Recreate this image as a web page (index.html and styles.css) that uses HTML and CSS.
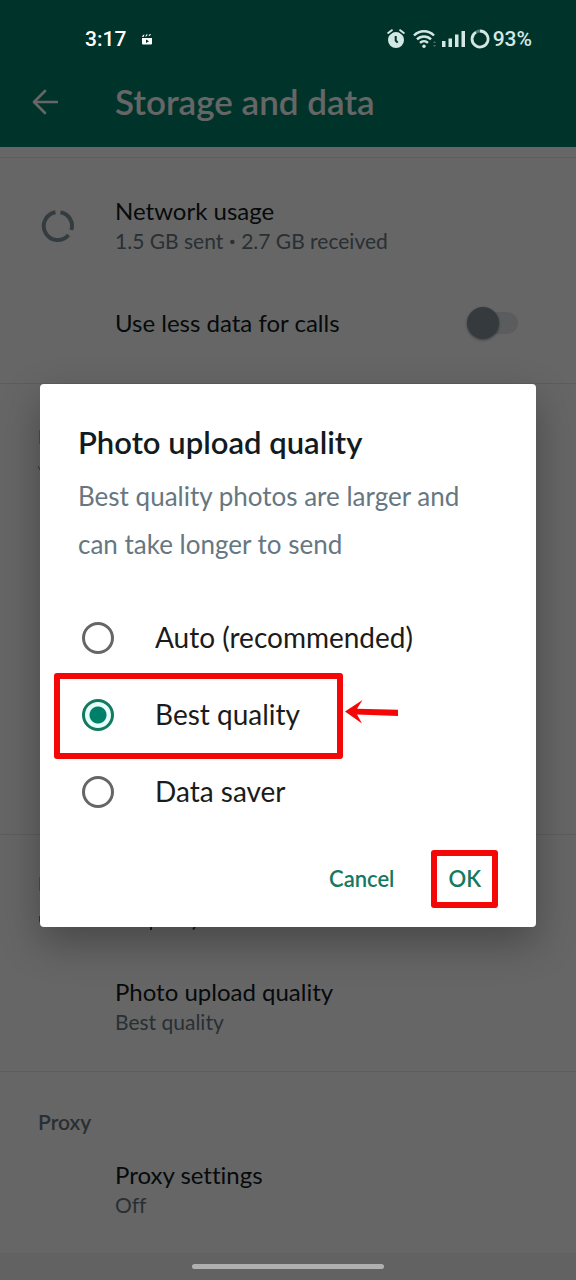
FILE: index.html
```html
<!DOCTYPE html>
<html lang="en">
<head>
<meta charset="utf-8">
<meta name="viewport" content="width=device-width, initial-scale=1">
<title>Storage and data</title>
<link rel="stylesheet" href="styles.css">
</head>
<body>
<div class="screen">
  <header class="app-bar">
    <button class="back" type="button" aria-label="Back">
      <svg width="26" height="26" viewBox="0 0 26 26" fill="none" stroke="currentColor" stroke-width="2.600" stroke-linecap="round" stroke-linejoin="round"><path d="M13 2 2 13l11 11M2.500 13H25"/></svg>
    </button>
    <h1 class="app-title">Storage and data</h1>
  </header>

  <main class="settings">
    <section class="section section-network">
      <div class="row">
        <svg class="row-icon" width="34" height="34" viewBox="0 0 34 34" fill="none" stroke="currentColor" stroke-width="4"><path d="M14.500 3.200A14 14 0 1 0 27.500 26M19.500 3.200A14 14 0 0 1 30.400 21"/></svg>
        <div class="row-text">
          <span class="row-title">Network usage</span>
          <span class="row-sub">1.5 GB sent <span class="bullet">•</span> 2.7 GB received</span>
        </div>
      </div>
      <div class="row row-switch">
        <label class="row-title row-text" for="less-data">Use less data for calls</label>
        <input class="switch" id="less-data" type="checkbox" role="switch">
      </div>
    </section>
    <section class="section section-media"></section>
    <section class="section section-upload">
      <div class="row">
        <div class="row-text">
          <span class="row-title">Photo upload quality</span>
          <span class="row-sub">Best quality</span>
        </div>
      </div>
    </section>
    <section class="section section-proxy">
      <h2 class="section-title">Proxy</h2>
      <div class="row">
        <div class="row-text">
          <span class="row-title">Proxy settings</span>
          <span class="row-sub">Off</span>
        </div>
      </div>
    </section>
  </main>
  <footer class="nav-bar"></footer>

  <div class="scrim">
    <form class="dialog" role="dialog" aria-labelledby="dialog-title">
      <h2 class="dialog-title" id="dialog-title">Photo upload quality</h2>
      <p class="dialog-text">Best quality photos are larger and can take longer to send</p>
      <div class="options">
        <label class="option"><input class="radio" type="radio" name="quality">Auto (recommended)</label>
        <div class="option-marked">
          <label class="option"><input class="radio" type="radio" name="quality" checked>Best quality</label>
          <span class="mark mark-option"></span>
          <svg class="arrow" width="54" height="24" viewBox="0 0 54 24" fill="#f40707"><path d="M0 11.500 17.500 0 12 8.800 53 9.800V16L12 14.500 17 23.500Z"/></svg>
        </div>
        <label class="option"><input class="radio" type="radio" name="quality">Data saver</label>
      </div>
      <div class="actions">
        <button class="action" type="button">Cancel</button>
        <button class="action action-ok" type="button">OK<span class="mark mark-ok"></span></button>
      </div>
      <!-- Edges of the list text that show past the dialog -->
      <svg class="peek peek-left" width="2" height="500" viewBox="0 0 2 500" stroke="#2b2f31" fill="none" aria-hidden="true"><path d="M1.500 6v14M1.500 453v14" opacity=".5"/><path d="M0 42l2 4M1.500 492v6"/></svg>
      <svg class="peek peek-bottom" width="50" height="4" viewBox="0 0 50 4" stroke="#15181a" stroke-width="2" fill="none" aria-hidden="true"><path d="M2 0v3M46 0l-2 2.500"/></svg>
    </form>
  </div>

  <div class="status-bar">
    <span class="time">3:17</span>
    <svg class="clip" width="10" height="11" viewBox="0 0 10 11" fill="currentColor"><path fill-rule="evenodd" d="M0 4h10v5.500a1 1 0 0 1-1 1H1a1 1 0 0 1-1-1ZM4 5.500v3.500l3-1.700Z"/><path d="M0 3 1 1l1.500-.4L1.500 3ZM3.200 2.600l1-2L5.700.3l-1 2ZM6.500 2l1-1.700L9 0 8 1.800Z"/></svg>
    <span class="indicators">
      <svg width="18" height="20" viewBox="0 0 18 20"><circle cx="9" cy="11" r="8" fill="currentColor"/><path d="M1 4.500 5 1.300M17 4.500 13 1.300" stroke="#00332a" stroke-width="4.500"/><path d="M1.200 4 4.800 1.200M16.800 4 13.200 1.200" stroke="currentColor" stroke-width="2" stroke-linecap="round"/><path d="M8.700 7v4.500l2 2.200" fill="none" stroke="#00332a" stroke-width="2"/></svg>
      <svg class="wifi" width="24" height="20" viewBox="0 0 24 20" fill="none" stroke="currentColor" stroke-width="2.400"><path d="M1 6.500a14 14 0 0 1 20 0M4 10.300a10 10 0 0 1 14 0M7 13.800a5.800 5.800 0 0 1 8 0"/><circle cx="11" cy="17.300" r="1.700" fill="currentColor" stroke="none"/><path d="m20 14 1.500-2 1.500 2ZM20 16l1.500 2 1.500-2Z" fill="currentColor" stroke="none" opacity=".35"/></svg>
      <svg class="signal" width="24" height="18" viewBox="0 0 24 18" fill="currentColor"><path d="M0 11h3.500v6H0ZM6.500 8.500H10V17H6.500ZM13 4.500h3.500V17H13ZM19.500 1H23v16h-3.500Z"/></svg>
      <svg class="battery" width="20" height="20" viewBox="0 0 20 20" fill="none" stroke="currentColor" stroke-width="2.800"><path d="M10 2a8 8 0 1 1-4 1.100"/><path d="M6 3.100A8 8 0 0 1 10 2" opacity=".4"/></svg>
      <span class="percent">93%</span>
    </span>
  </div>
  <div class="home-handle"></div>
</div>
</body>
</html>
```

FILE: styles.css
```css
* {
  box-sizing: border-box;
}

body {
  margin: 0;
  font-family: Lato, "Noto Sans", sans-serif;
  font-variant-ligatures: none;
  color: #111b21;
  background: #fff;
}

h1, h2, p {
  margin: 0;
}

button {
  font: inherit;
  color: inherit;
  padding: 0;
  border: 0;
  background: none;
}

svg {
  display: block;
  flex: none;
}

.screen {
  position: relative;
  display: flex;
  flex-direction: column;
  min-height: 100vh;
}

.app-bar {
  display: flex;
  align-items: center;
  gap: 57px;
  padding: 74px 32px 18px;
  color: #fff;
  background: #008069;
}

.app-title {
  font-size: 35px;
  line-height: 55px;
  font-weight: 600;
}

.settings {
  flex: 1;
  display: flex;
  flex-direction: column;
  padding-top: 10px;
}

.section {
  border-top: 1px solid #e9e9e9;
}

.section-network {
  padding: 37px 56px 44px 41px;
}

.section-media {
  flex: 1;
}

.section-upload {
  padding: 141px 40px 35px;
}

.section-proxy {
  padding: 34px 38px 34px;
}

.section-title {
  font-size: 21px;
  line-height: 32px;
  font-weight: 600;
  color: #667781;
}

.row {
  display: flex;
  align-items: center;
  padding-left: 75px;
}

.section-proxy .row {
  padding: 21px 0 0 77px;
}

.section-network .row {
  padding-left: 74px;
}

.section-network .row:first-child {
  padding-left: 0;
  gap: 40px;
}

.row-icon {
  color: #8696a0;
}

.row-text {
  display: flex;
  flex-direction: column;
}

.row-title {
  font-size: 24px;
  line-height: 32px;
}

.row-sub {
  font-size: 21px;
  line-height: 28px;
  color: #667781;
}

.bullet {
  font-family: Roboto, sans-serif;
}

.row-switch {
  justify-content: space-between;
  padding-top: 51px;
}

.switch {
  appearance: none;
  position: relative;
  width: 48px;
  height: 22px;
  margin: 0 2px 0 0;
  border-radius: 11px;
  background: #e3e7e9;
}

.switch::before {
  content: "";
  position: absolute;
  left: -3px;
  top: -5px;
  width: 32px;
  height: 32px;
  border-radius: 50%;
  background: #82929a;
  box-shadow: 0 1px 3px rgba(0, 0, 0, .4);
}

.nav-bar {
  height: 27px;
  background: #f5f5f5;
}

.scrim {
  position: absolute;
  inset: 0;
  display: flex;
  align-items: center;
  padding: 31px 40px 0;
  background: rgba(0, 0, 0, .6);
}

.dialog {
  position: relative;
  flex: 1;
  padding: 38px 38px 23px;
  border-radius: 4px;
  background: #fff;
  box-shadow: 0 16px 40px rgba(0, 0, 0, .3);
}

.dialog-title {
  font-size: 31px;
  line-height: 40px;
  font-weight: 600;
}

.dialog-text {
  padding-top: 10px;
  font-size: 26px;
  line-height: 48px;
  color: #667781;
}

.options {
  padding: 31px 0 24px;
}

.option {
  display: flex;
  align-items: center;
  gap: 41px;
  padding-left: 4px;
  font-size: 28px;
  line-height: 77px;
  color: #1b1b1b;
}

.option-marked {
  position: relative;
}

.radio {
  appearance: none;
  width: 32px;
  height: 32px;
  margin: 0;
  border: 3px solid #666;
  border-radius: 50%;
}

.radio:checked {
  border-color: #13795f;
  background: radial-gradient(circle, #008069 8px, #e6fffa 9px);
}

.mark {
  position: absolute;
  border: 6px solid #f40707;
  border-radius: 3px;
  pointer-events: none;
}

.mark-option {
  left: -24px;
  top: -3px;
  width: 289px;
  height: 86px;
}

.mark-ok {
  inset: -4px -17px;
}

.arrow {
  position: absolute;
  left: 267px;
  top: 24px;
}

.peek {
  position: absolute;
}

.peek-left {
  left: -2px;
  top: 40px;
}

.peek-bottom {
  left: 109px;
  top: 100%;
}

.actions {
  display: flex;
  justify-content: flex-end;
  gap: 54px;
  padding-right: 17px;
}

.action {
  font-size: 22px;
  line-height: 50px;
  font-weight: 600;
  color: #13795f;
}

.action-ok {
  position: relative;
}

.status-bar {
  position: absolute;
  inset: 0 0 auto;
  display: flex;
  align-items: center;
  padding: 24px 44px 0 85px;
  font-family: Roboto, sans-serif;
  font-size: 21px;
  line-height: 30px;
  color: #fff;
}

.time {
  font-weight: 500;
}

.clip {
  margin-left: 16px;
}

.indicators {
  display: flex;
  align-items: center;
  margin-left: auto;
  color: #d3e8e4;
}

.wifi {
  margin-left: 8px;
}

.signal {
  margin-left: 5px;
}

.battery {
  margin: 0 3px 0 4px;
}

.percent {
  font-weight: 500;
}

.home-handle {
  position: absolute;
  left: 50%;
  bottom: 11px;
  width: 192px;
  height: 5px;
  border-radius: 3px;
  background: #b0b0b0;
  transform: translateX(-50%);
}
```
